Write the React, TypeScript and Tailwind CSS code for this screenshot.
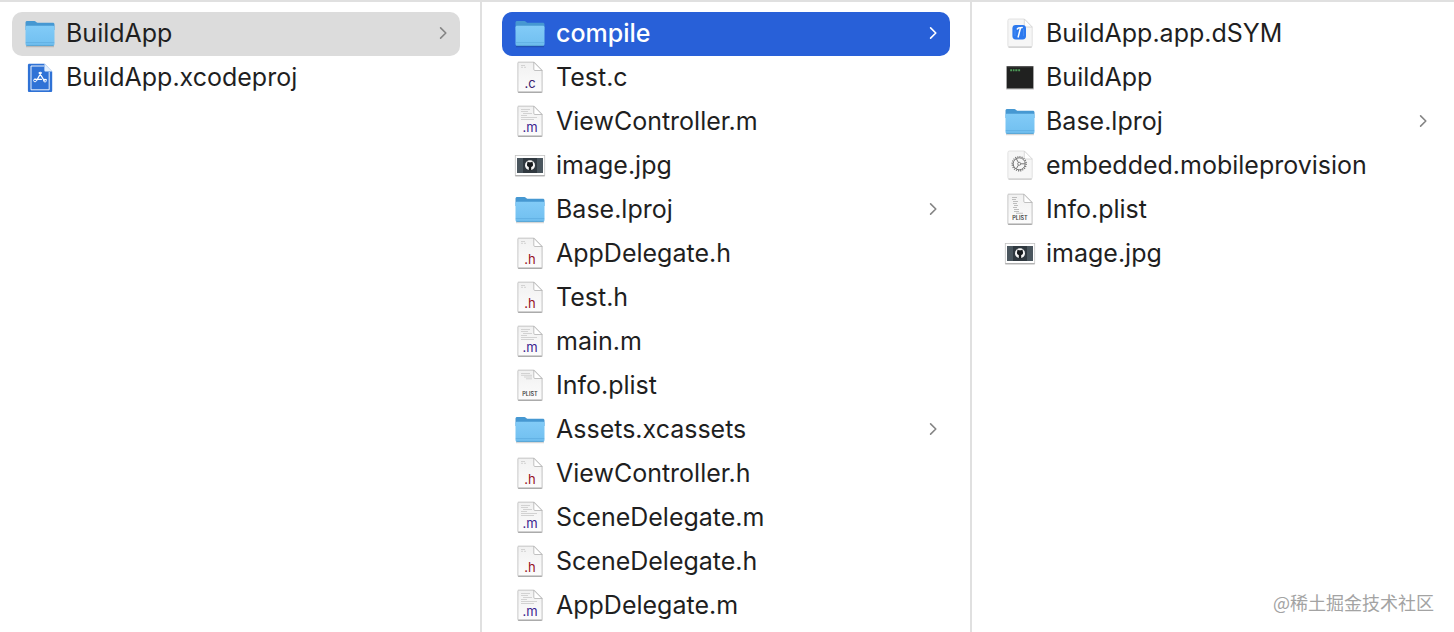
import { useId } from "react";
import clsx from "clsx";

type Kind = "folder" | "project" | "c" | "h" | "m" | "image" | "plist" | "plistPreview" | "dsym" | "exec" | "provision";

interface Entry {
  name: string;
  kind: Kind;
  opens?: boolean;
  state?: "active" | "path";
}

const columns: { label: string; entries: Entry[] }[] = [
  {
    label: "Project",
    entries: [
      { name: "BuildApp", kind: "folder", opens: true, state: "path" },
      { name: "BuildApp.xcodeproj", kind: "project" },
    ],
  },
  {
    label: "BuildApp",
    entries: [
      { name: "compile", kind: "folder", opens: true, state: "active" },
      { name: "Test.c", kind: "c" },
      { name: "ViewController.m", kind: "m" },
      { name: "image.jpg", kind: "image" },
      { name: "Base.lproj", kind: "folder", opens: true },
      { name: "AppDelegate.h", kind: "h" },
      { name: "Test.h", kind: "h" },
      { name: "main.m", kind: "m" },
      { name: "Info.plist", kind: "plist" },
      { name: "Assets.xcassets", kind: "folder", opens: true },
      { name: "ViewController.h", kind: "h" },
      { name: "SceneDelegate.m", kind: "m" },
      { name: "SceneDelegate.h", kind: "h" },
      { name: "AppDelegate.m", kind: "m" },
    ],
  },
  {
    label: "compile",
    entries: [
      { name: "BuildApp.app.dSYM", kind: "dsym" },
      { name: "BuildApp", kind: "exec" },
      { name: "Base.lproj", kind: "folder", opens: true },
      { name: "embedded.mobileprovision", kind: "provision" },
      { name: "Info.plist", kind: "plistPreview" },
      { name: "image.jpg", kind: "image" },
    ],
  },
];

function FolderIcon({ id }: { id: string }) {
  return (
    <>
      <defs>
        <linearGradient id={id} x1="0" y1="0" x2="0" y2="1">
          <stop offset="0" stopColor="#82cbf7" />
          <stop offset="1" stopColor="#70bff0" />
        </linearGradient>
      </defs>
      <path d="M2 29.5h28" stroke="#000" strokeOpacity=".16" strokeWidth="1.5" />
      <path d="M1.5 5.8c0-1.4.6-1.9 1.9-1.9h6.1c1.4 0 1.9.3 2.6 1.1.5.6 1 .7 1.9.7h14.6c1.3 0 1.9.6 1.9 1.9V13h-29z" fill="#4698d2" />
      <path d="M1.5 10.4c0-1.1.6-1.7 1.7-1.7h25.6c1.1 0 1.7.6 1.7 1.7v16.4c0 1.5-.7 2.2-2.2 2.2H3.7c-1.5 0-2.2-.7-2.2-2.2z" fill={`url(#${id})`} />
      <path d="M1.8 25.6h28.4" stroke="#5aaade" strokeWidth=".7" />
      <path d="M2.3 28.4h27.4" stroke="#539fcd" strokeWidth=".8" />
    </>
  );
}

function Sheet({ id }: { id: string }) {
  return (
    <>
      <defs>
        <linearGradient id={id} x1="0" y1="0" x2="0" y2="1">
          <stop offset="0" stopColor="#f1f1f1" />
          <stop offset="1" stopColor="#fcfcfc" />
        </linearGradient>
      </defs>
      <path d="M4.5 1.5H20l8 8v21.8H4.5z" fill="none" stroke="#000" strokeOpacity=".1" strokeWidth="1.6" />
      <path d="M4.7 1.2c-.5 0-.8.3-.8.8v28.3c0 .5.3.8.8.8h22.5c.5 0 .8-.3.8-.8V9.5l-8.2-8.3z" fill={`url(#${id})`} stroke="#b9b9b9" strokeWidth=".7" />
      <path d="M4.2 31.2h23.6" stroke="#8c8c8c" strokeWidth=".8" />
      <path d="M19.8 1.2v7.1c0 .8.4 1.2 1.2 1.2h7z" fill="#fff" stroke="#b2b2b2" strokeWidth=".8" />
    </>
  );
}

function SoftSheet() {
  return (
    <>
      <path d="M5.5 2h14.8l7.9 8v18.5c0 1-.6 1.6-1.6 1.6H5.5c-1 0-1.6-.6-1.6-1.6V3.6c0-1 .6-1.6 1.6-1.6z" fill="#f6f6f6" stroke="#dcdcdc" strokeWidth=".8" />
      <path d="M4.5 30.1h23.2" stroke="#b5b5b5" strokeWidth=".8" />
      <path d="M20.3 2v6.6c0 .9.5 1.4 1.4 1.4h6.5z" fill="#fff" stroke="#d3d3d3" strokeWidth=".8" />
    </>
  );
}

function SourceLabel({ text, color }: { text: string; color: string }) {
  return (
    <text x="16" y="26.5" textAnchor="middle" fontSize="13" fontFamily="Inter, sans-serif" fill={color}>
      {text}
    </text>
  );
}

function Snippet({ dense }: { dense?: boolean }) {
  return dense ? (
    <g stroke="#c9c9c9" strokeWidth=".8">
      <path d="M7 4.5h9M7 6.5h7M9 8.5h9M7 10.5h6M7 12.5h16M7 14.5h13" />
    </g>
  ) : (
    <path d="M7 4.5h4M7 6.3h2M10 6.3h2" stroke="#c9c9c9" strokeWidth=".8" />
  );
}

function PlistLabel() {
  return (
    <text x="16" y="27.2" textAnchor="middle" fontSize="5.5" fontWeight="600" fontFamily="Inter, sans-serif" fill="#444">
      PLIST
    </text>
  );
}

function Drawing({ kind }: { kind: Kind }) {
  const id = useId();
  switch (kind) {
    case "folder":
      return <FolderIcon id={id} />;
    case "project":
      return (
        <>
          <path d="M5.4 2.8h15.2l7.6 7.7v19c0 1-.5 1.5-1.5 1.5H5.4c-1 0-1.5-.5-1.5-1.5V4.3c0-1 .5-1.5 1.5-1.5z" fill="#2f72d6" />
          <path d="M20 5H7v23.8h18.2V11" fill="none" stroke="#fff" strokeWidth=".9" />
          <path d="M20.4 2.8v6.5c0 .9.4 1.3 1.3 1.3h6.5z" fill="#e2effd" />
          <g stroke="#fff" strokeWidth="1.2" strokeLinecap="round" fill="none">
            <path d="M15.3 11.6l4.9 8M17.1 11.6l-4.3 7.6M10.8 18.4h6.6M20 18.6h2.2" />
          </g>
          <g fill="none" stroke="#fff" strokeWidth=".9">
            <circle cx="11" cy="19.4" r="1.4" />
            <circle cx="21" cy="19.6" r="1.4" />
            <circle cx="16.2" cy="12.2" r="1" />
          </g>
        </>
      );
    case "c":
      return <><Sheet id={id} /><Snippet /><SourceLabel text=".c" color="#37206f" /></>;
    case "h":
      return <><Sheet id={id} /><Snippet /><SourceLabel text=".h" color="#96121f" /></>;
    case "m":
      return <><Sheet id={id} /><Snippet dense /><SourceLabel text=".m" color="#3c1f90" /></>;
    case "plist":
      return (
        <>
          <Sheet id={id} />
          <path d="M7 4.5h9M7 6.3h11M10 8h8M12 9.8h6" stroke="#cecece" strokeWidth=".9" />
          <PlistLabel />
        </>
      );
    case "plistPreview":
      return (
        <>
          <Sheet id={id} />
          <path d="M8 4.5h5M8 6.5h4M9 8.5h5M9 10.5h4M10 12.5h4M9 14.5h4M10 16.5h5M10 18.5h5M12 20.3h7" stroke="#bdbdbd" strokeWidth="1.1" />
          <PlistLabel />
        </>
      );
    case "image":
      return (
        <>
          <rect x="1.3" y="6.5" width="29.4" height="20" fill="#fff" stroke="#c4c4c4" strokeWidth=".8" />
          <path d="M1.3 26.9h29.4" stroke="#999" strokeWidth=".9" />
          <rect x="3" y="9" width="26" height="15" fill="#4a565e" />
          <rect x="9" y="9" width="14" height="15" fill="#303940" />
          <circle cx="16" cy="16.2" r="5" fill="#f6f6f6" />
          <path d="M13.3 14l.2-1.5 1.4.8h2.2l1.4-.8.2 1.5c.9 2.2.1 3.7-1.5 4v3.4h-2.4V18c-1.6-.3-2.4-1.8-1.5-4z" fill="#15191c" />
        </>
      );
    case "dsym":
      return (
        <>
          <SoftSheet />
          <rect x="8.4" y="8.1" width="13.6" height="14.4" rx="3.4" fill="#2d79ee" />
          <path d="M13.4 11.9l1.2-1 3.6-.5" fill="none" stroke="#fff" strokeWidth="1.5" strokeLinecap="round" strokeLinejoin="round" />
          <path d="M16.4 11.2l-2.2 8.7" fill="none" stroke="#fff" strokeWidth="1.5" strokeLinecap="round" />
          <path d="M11 13v6M19.6 12v7" stroke="#5596f5" strokeWidth=".7" />
        </>
      );
    case "exec":
      return (
        <>
          <rect x="2.2" y="5" width="27.6" height="23.5" fill="#b9b9b9" />
          <rect x="2.8" y="5.4" width="26.4" height="22" fill="#202120" />
          <path d="M3.5 6h25" stroke="#494949" strokeWidth=".7" />
          <path d="M6.2 9.3h2M9 9.3h1.5M11.3 9.3h2.1M14.2 9.3h1.9" stroke="#4d9c57" strokeWidth="1.9" />
        </>
      );
    case "provision":
      return (
        <>
          <SoftSheet />
          <g fill="none" stroke="#777">
            <circle cx="15.2" cy="14.8" r="7" strokeWidth="1.4" strokeDasharray="1.1 1.1" />
            <circle cx="15.2" cy="14.8" r="6" strokeWidth="1" />
            <circle cx="15.2" cy="14.8" r="1.5" strokeWidth=".9" />
            <path d="M16.7 14.8H21M14.4 13.5l-2.1-3.7M14.4 16.1l-2.1 3.7" strokeWidth="1" />
          </g>
        </>
      );
  }
}

function Row({ entry }: { entry: Entry }) {
  const active = entry.state === "active";
  return (
    <li>
      <button
        type="button"
        aria-current={entry.state ? "true" : undefined}
        className={clsx(
          "flex h-11 w-full items-center rounded-[10px] px-3 pb-0.5 text-left",
          active && "bg-[#2860d8] font-medium text-white",
          entry.state === "path" && "bg-[#dcdcdc]",
        )}
      >
        <svg viewBox="0 0 32 32" className="size-8 shrink-0" aria-hidden="true">
          <Drawing kind={entry.kind} />
        </svg>
        <span className="ml-2.5 min-w-0 flex-1 truncate leading-8">{entry.name}</span>
        {entry.opens && (
          <svg viewBox="0 0 10 14" className={clsx("h-3.5 w-2.5 shrink-0", active ? "text-white" : "text-[#858585]")} aria-hidden="true">
            <path d="M2.6 1.9L7.8 7l-5.2 5.1" fill="none" stroke="currentColor" strokeWidth="1.6" strokeLinecap="round" strokeLinejoin="round" />
          </svg>
        )}
      </button>
    </li>
  );
}

export default function App() {
  return (
    <main className="relative grid min-h-screen grid-cols-[482fr_490fr_482fr] border-t-2 border-[#e0e0e0] bg-white font-['Inter',sans-serif] text-[25px] text-[#1f1f1f]">
      {columns.map((column, index) => (
        <section
          key={column.label}
          aria-label={column.label}
          className={clsx(
            "min-w-0 pt-2.5",
            index === 0 ? "pl-3" : "pl-5",
            index < 2 ? "border-r-2 border-[#e0e0e0] pr-5" : "pr-3.5",
          )}
        >
          <ul>
            {column.entries.map((entry) => (
              <Row key={entry.name} entry={entry} />
            ))}
          </ul>
        </section>
      ))}
      <p className="absolute right-5 bottom-4 font-['Noto_Sans_CJK_SC',sans-serif] text-lg text-[#a3a3a3]">@稀土掘金技术社区</p>
    </main>
  );
}
